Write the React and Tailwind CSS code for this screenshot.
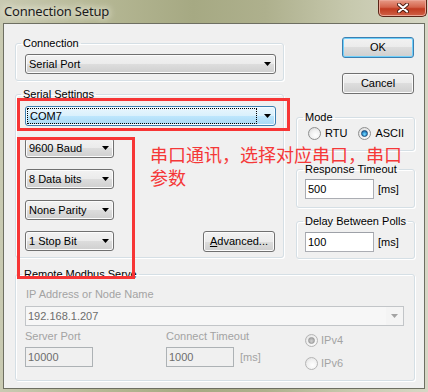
import React from "react";

const Arrow = ({ color = "#000" }) => (
  <svg width="7" height="4" viewBox="0 0 7 4" className="shrink-0">
    <path d="M0 0H7L3.5 4Z" fill={color} />
  </svg>
);

const Select = ({ children, className = "" }) => (
  <div
    className={
      "h-[20px] rounded-[3px] border border-[#707070] bg-[linear-gradient(to_bottom,#f2f2f2_0%,#ebebeb_50%,#dddddd_50%,#cfcfcf_100%)] shadow-[inset_0_0_0_1px_#fcfcfc] flex items-center justify-between pl-[3px] pr-[4px] text-black " +
      className
    }
  >
    <span className="leading-[13px]">{children}</span>
    <Arrow />
  </div>
);

const Button = ({ children, def = false, className = "" }) => (
  <div
    className={
      "h-[21px] w-[72px] rounded-[3px] border flex items-center justify-center text-black bg-[linear-gradient(to_bottom,#f2f2f2_0%,#ebebeb_50%,#dddddd_50%,#cfcfcf_100%)] " +
      (def
        ? "border-[#3c7fb1] shadow-[inset_0_0_0_1px_#6fd0fb]"
        : "border-[#707070] shadow-[inset_0_0_0_1px_#fbfbfb]") +
      " " +
      className
    }
  >
    {children}
  </div>
);

const Radio = ({ checked = false, disabled = false }) => (
  <div
    className={
      "w-[13px] h-[13px] rounded-full border flex items-center justify-center shrink-0 " +
      (disabled
        ? "border-[#b5b5b5] bg-[radial-gradient(circle_at_60%_65%,#ffffff_0%,#f0f0f0_55%,#d8d8d8_100%)]"
        : "border-[#8e8f8f] bg-[radial-gradient(circle_at_60%_65%,#ffffff_0%,#f0f0f0_50%,#cfcfcf_100%)]")
    }
  >
    {checked && (
      <div
        className={
          "w-[7px] h-[7px] rounded-full " +
          (disabled
            ? "bg-[radial-gradient(circle_at_50%_60%,#d0d0d0_0%,#9a9a9a_100%)] border border-[#9c9c9c]"
            : "bg-[radial-gradient(circle_at_50%_65%,#7ce0ff_0%,#2d8fd0_55%,#174f82_100%)] border border-[#1c4c7a]")
        }
      />
    )}
  </div>
);

const Field = ({ legend, legendClass = "ml-[5px]", className = "", children }) => (
  <fieldset
    className={
      "border border-[#d5dfe5] rounded-[3px] p-0 m-0 min-w-0 shadow-[inset_1px_1px_0_#ffffff,1px_1px_0_#ffffff] " +
      className
    }
  >
    <legend className={"px-[2px] leading-[13px] text-black " + legendClass}>{legend}</legend>
    {children}
  </fieldset>
);

const Input = ({ value, className = "", disabled = false }) => (
  <div
    className={
      "h-[20px] border flex items-center pl-[2px] leading-[13px] " +
      (disabled
        ? "bg-[#f0f0f0] border-[#adb2b5] text-[#6d6d6d]"
        : "bg-white border-[#abadb3] border-t-[#9ea1a8] text-black") +
      " " +
      className
    }
  >
    {value}
  </div>
);

export default function App() {
  return (
    <div className="w-[428px] h-[392px] relative overflow-hidden flex flex-col bg-[linear-gradient(to_right,#c9cab2_0%,#b6b895_22%,#a6a983_45%,#aeb08d_62%,#c7c9ae_82%,#d6d7c5_100%)] font-['Liberation_Sans',Arial,sans-serif] text-[11px]">
      {/* Title bar */}
      <div className="h-[23px] flex justify-between shrink-0">
        <span className="pl-[4px] pt-[3px] text-[13px] leading-[16px] text-[#1b1b1b] [text-shadow:0_0_6px_#f4f4e8,0_0_10px_#f4f4e8] font-['Noto_Sans','Open_Sans',sans-serif] tracking-[-0.2px]">
          Connection Setup
        </span>
        <div className="w-[49px] h-[17px] mr-[1px] rounded-b-[5px] border border-t-0 border-[#5b2517] bg-[linear-gradient(to_bottom,#e79a87_0%,#d4644c_45%,#c13b21_55%,#cf6247_100%)] shadow-[inset_0_0_0_1px_#eba595] flex items-center justify-center">
          <svg width="12" height="10" viewBox="0 0 12 10">
            <path d="M2 1.5L10 8.5M10 1.5L2 8.5" stroke="#4a1a10" strokeWidth="4" strokeLinecap="round" />
            <path d="M2 1.5L10 8.5M10 1.5L2 8.5" stroke="#ffffff" strokeWidth="2.2" strokeLinecap="round" />
          </svg>
        </div>
      </div>

      {/* Client area */}
      <div className="mx-[3px] h-[366px] shrink-0 border border-[#6e6f62] bg-[#f0f0f0] flex flex-col">
        <div className="flex items-start pl-[11px] pr-[9px] pt-[13px]">
          {/* Left column */}
          <div className="w-[269px] flex flex-col shrink-0">
            <Field legend="Connection">
              <div className="pt-[4px] pl-[9px] pr-[7px] pb-[6px]">
                <Select>Serial Port</Select>
              </div>
            </Field>
            <Field legend="Serial Settings" className="mt-[7px]">
              <div className="pt-[5px] pl-[9px] pr-[7px] pb-[6px] flex flex-col">
                <div className="h-[20px] rounded-[3px] border border-[#3c7fb1] bg-[linear-gradient(to_bottom,#eaf6fd_0%,#d9f0fc_50%,#bee6fd_50%,#a7d9f5_100%)] shadow-[inset_0_0_0_1px_#f4fbff] flex items-center justify-between pl-[1px] pr-[4px]">
                  <div className="w-[230px] h-[16px] border border-dotted border-black flex items-center pl-[2px] leading-[13px] text-black">
                    COM7
                  </div>
                  <Arrow />
                </div>
                <div className="mt-[12px] flex items-end justify-between">
                  <div className="flex flex-col gap-[11px] w-[89px]">
                    <Select>9600 Baud</Select>
                    <Select>8 Data bits</Select>
                    <Select>None Parity</Select>
                    <Select>1 Stop Bit</Select>
                  </div>
                  <Button className="mr-[1px] mb-[-1px]">
                    <span>
                      <span className="underline">A</span>dvanced...
                    </span>
                  </Button>
                </div>
              </div>
            </Field>
          </div>

          {/* Right column */}
          <div className="ml-[12px] w-[119px] flex flex-col shrink-0">
            <Button def className="self-end mr-[1px]">OK</Button>
            <Button className="self-end mr-[1px] mt-[15px]">Cancel</Button>
            <Field legend="Mode" legendClass="ml-[6px]" className="mt-[17px]">
              <div className="pt-[3px] pl-[11px] pb-[10px] flex items-center">
                <Radio />
                <span className="ml-[4px] leading-[13px]">RTU</span>
                <div className="ml-[11px]">
                  <Radio checked />
                </div>
                <span className="ml-[4px] leading-[13px]">ASCII</span>
              </div>
            </Field>
            <Field legend="Response Timeout" legendClass="ml-[6px]" className="mt-[12px]">
              <div className="pt-[3px] pl-[8px] pb-[8px] flex items-center">
                <Input value="500" className="w-[69px]" />
                <span className="ml-[4px] leading-[13px]">[ms]</span>
              </div>
            </Field>
            <Field legend="Delay Between Polls" legendClass="ml-[6px]" className="mt-[7px]">
              <div className="pt-[4px] pl-[8px] pb-[6px] flex items-center">
                <Input value="100" className="w-[69px]" />
                <span className="ml-[4px] leading-[13px]">[ms]</span>
              </div>
            </Field>
          </div>
        </div>

        {/* Remote Modbus Server */}
        <Field legend="Remote Modbus Serve" legendClass="ml-[6px]" className="mt-[9px] ml-[11px] mr-[9px]">
          <div className="pt-[7px] pl-[9px] pb-[10px] flex flex-col text-[#a3a3a3]">
            <span className="ml-[1px] leading-[13px]">IP Address or Node Name</span>
            <div className="mt-[5px] w-[379px] h-[20px] border border-[#c2c5c8] bg-[#f7f7f7] flex items-center justify-between text-[#6d6d6d]">
              <span className="pl-[2px] leading-[13px]">192.168.1.207</span>
              <div className="w-[17px] h-full flex items-center justify-center bg-[#f4f4f4]">
                <Arrow color="#a3a3a3" />
              </div>
            </div>
            <div className="mt-[4px] flex items-start">
              <div className="w-[141px] flex flex-col">
                <span className="leading-[13px]">Server Port</span>
                <Input disabled value="10000" className="mt-[4px] w-[68px]" />
              </div>
              <div className="w-[139px] flex flex-col">
                <span className="leading-[13px]">Connect Timeout</span>
                <div className="mt-[4px] flex items-center">
                  <Input disabled value="1000" className="w-[68px]" />
                  <span className="ml-[6px] leading-[13px]">[ms]</span>
                </div>
              </div>
              <div className="pt-[4px] flex flex-col gap-[10px]">
                <div className="flex items-center">
                  <Radio checked disabled />
                  <span className="ml-[3px] leading-[13px]">IPv4</span>
                </div>
                <div className="flex items-center">
                  <Radio disabled />
                  <span className="ml-[3px] leading-[13px]">IPv6</span>
                </div>
              </div>
            </div>
          </div>
        </Field>
      </div>

      {/* Annotations */}
      <div className="absolute left-[17px] top-[98px] w-[273px] h-[33px] border-[3px] border-[#f73535] pointer-events-none" />
      <div className="absolute left-[17px] top-[137px] w-[118px] h-[142px] border-[3px] border-[#f73535] pointer-events-none" />
      <div className="absolute left-[150px] top-[143px] text-[18px] leading-[23px] text-[#f53838] font-['Noto_Sans_CJK_SC',sans-serif] whitespace-nowrap pointer-events-none">
        串口通讯，选择对应串口，串口
        <br />
        参数
      </div>
    </div>
  );
}
